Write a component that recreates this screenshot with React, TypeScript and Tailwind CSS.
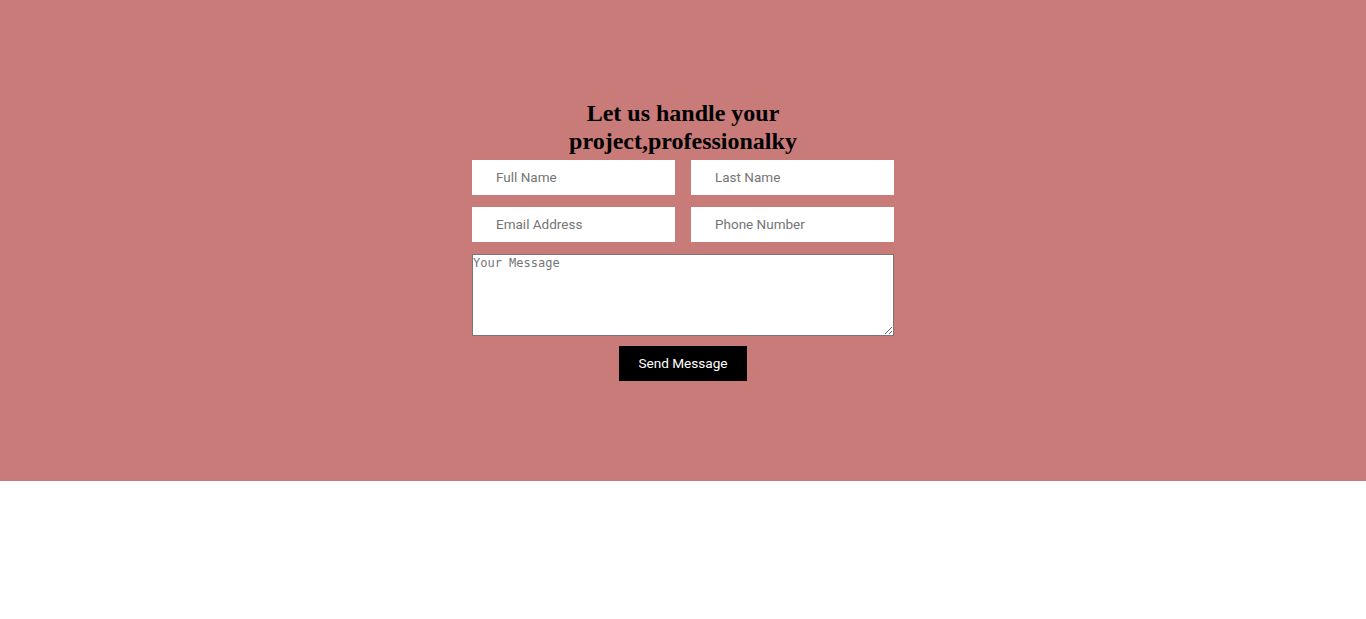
export default function App() {
  return (
    <div className="min-h-[619px] bg-white">
      <section className="h-[481px] bg-[#c97b7a] pt-[99px]">
        <div className="mx-auto w-[422px]">
          <h2 className="text-center font-['Liberation_Serif',serif] text-[24px] font-bold leading-[28px] text-black">
            Let us handle your project,professionalky
          </h2>
          <form className="mt-[5px] flex flex-col" onSubmit={(e) => e.preventDefault()}>
            <div className="grid grid-cols-2 gap-4">
              <input
                placeholder="Full Name"
                className="h-[35px] bg-white pl-6 pb-[2px] font-['Roboto',Arial,sans-serif] text-[13.5px] outline-none placeholder:text-[#757575]"
              />
              <input
                placeholder="Last Name"
                className="h-[35px] bg-white pl-6 pb-[2px] font-['Roboto',Arial,sans-serif] text-[13.5px] outline-none placeholder:text-[#757575]"
              />
            </div>
            <div className="mt-3 grid grid-cols-2 gap-4">
              <input
                placeholder="Email Address"
                className="h-[35px] bg-white pl-6 pb-[2px] font-['Roboto',Arial,sans-serif] text-[13.5px] outline-none placeholder:text-[#757575]"
              />
              <input
                placeholder="Phone Number"
                className="h-[35px] bg-white pl-6 pb-[2px] font-['Roboto',Arial,sans-serif] text-[13.5px] outline-none placeholder:text-[#757575]"
              />
            </div>
            <textarea
              placeholder="Your Message"
              className="mt-3 h-[82px] w-full border border-[#767676] bg-white px-0 py-[1px] font-['DejaVu_Sans_Mono',monospace] text-[12px] leading-[15px] outline-none placeholder:text-[#757575]"
            />
            <button
              type="submit"
              className="mx-auto mt-[10px] h-[35px] w-32 bg-black font-['Roboto',Arial,sans-serif] text-[13.6px] text-white"
            >
              Send Message
            </button>
          </form>
        </div>
      </section>
    </div>
  );
}
